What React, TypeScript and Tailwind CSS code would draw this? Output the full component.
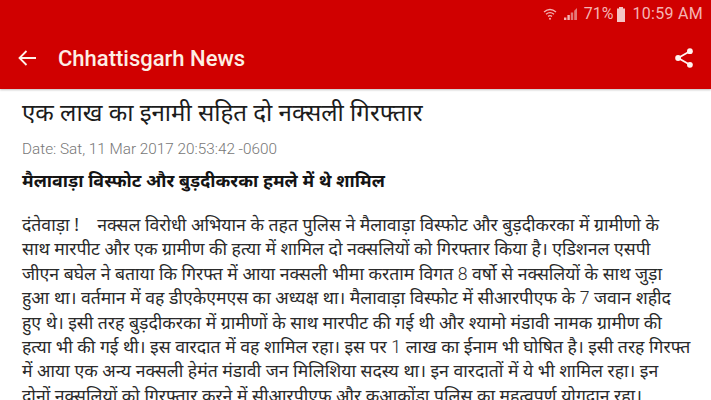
import React from "react";

const lines = [
  "दंतेवाड़ा !    नक्सल विरोधी अभियान के तहत पुलिस ने मैलावाड़ा विस्फोट और बुड़दीकरका में ग्रामीणो के",
  "साथ मारपीट और एक ग्रामीण की हत्या में शामिल दो नक्सलियों को गिरफ्तार किया है। एडिशनल एसपी",
  "जीएन बघेल ने बताया कि गिरफ्त में आया नक्सली भीमा करताम विगत 8 वर्षो से नक्सलियों के साथ जुड़ा",
  "हुआ था। वर्तमान में वह डीएकेएमएस का अध्यक्ष था। मैलावाड़ा विस्फोट में सीआरपीएफ के 7 जवान शहीद",
  "हुए थे। इसी तरह बुड़दीकरका में ग्रामीणों के साथ मारपीट की गई थी और श्यामो मंडावी नामक ग्रामीण की",
  "हत्या भी की गई थी। इस वारदात में वह शामिल रहा। इस पर 1 लाख का ईनाम भी घोषित है। इसी तरह गिरफ्त",
  "में आया एक अन्य नक्सली हेमंत मंडावी जन मिलिशिया सदस्य था। इन वारदातों में ये भी शामिल रहा। इन",
  "दोनों नक्सलियों को गिरफ्तार करने में सीआरपीएफ और कुआकोंडा पुलिस का महत्वपूर्ण योगदान रहा।",
];

function Line({ text }: { text: string }) {
  const parts = text.split(/(\d)/);
  return (
    <div className="h-[24.4px]">
      {parts.map((p, i) =>
        /^\d$/.test(p) ? (
          <span key={i} className="font-['Roboto',sans-serif] font-light leading-[0]">
            {p}
          </span>
        ) : (
          <span key={i}>{p}</span>
        ),
      )}
    </div>
  );
}

export default function App() {
  return (
    <div className="w-[711px] h-[400px] overflow-hidden bg-white font-['Roboto','Noto_Sans',sans-serif]">
      <header className="h-[89px] bg-[#d00000] flex flex-col shadow-[0_1px_2px_rgba(0,0,0,0.25)]">
        <div className="h-[27px] flex items-center justify-end gap-[3px] pr-[8px] pt-[1px] text-[16px] text-[#f5b4b4]">
          <svg width="16" height="14" viewBox="0 0 16 14" fill="none" stroke="#f5b4b4" strokeWidth="1.3">
            <path d="M2 5 Q8 0 14 5" />
            <path d="M4 7.2 Q8 4 12 7.2" />
            <path d="M6 9.4 Q8 8 10 9.4" />
            <circle cx="8" cy="11.8" r="1" fill="#f5b4b4" stroke="none" />
          </svg>
          <svg width="16" height="14" viewBox="0 0 16 14" className="ml-[2px]">
            <path d="M1 13h2.4v-2.5H1zM4.4 13h2.4V8H4.4z" fill="#f5b4b4" />
            <path d="M7.8 13h2.4V5.5H7.8zM11.2 13h2.8V1l-2.8 2.8z" fill="#e47878" />
          </svg>
          <span className="ml-[2px]">71%</span>
          <svg width="10" height="15" viewBox="0 0 10 15">
            <path d="M3 0h4v1.5h2V15H1V1.5h2z" fill="#f5c4c4" />
          </svg>
          <span className="ml-[3px] tracking-[0.3px]">10:59 AM</span>
        </div>
        <div className="flex-1 flex items-center pl-[18px] pr-[17px]">
          <svg width="18" height="16" viewBox="0 0 18 16" fill="none" stroke="#fff0e8" strokeWidth="1.8">
            <path d="M18 8H1.5M8.5 1 1.5 8l7 7" />
          </svg>
          <h1 className="ml-[22px] text-[22px] font-medium text-[#fdeee4]">Chhattisgarh News</h1>
          <svg className="ml-auto" width="20" height="22" viewBox="0 0 22 24" fill="#fff4f0">
            <circle cx="17.5" cy="4.5" r="3.2" />
            <circle cx="4.5" cy="12" r="3.2" />
            <circle cx="17.5" cy="19.5" r="3.2" />
            <path d="M4.5 12 17.5 4.5M4.5 12l13 7.5" stroke="#fff4f0" strokeWidth="2" />
          </svg>
        </div>
      </header>
      <main className="pl-[22px] font-['Noto_Sans','Roboto',sans-serif]">
        <h2 className="mt-[7px] text-[24.1px] leading-[32px] text-[#1c1c1c]">एक लाख का इनामी सहित दो नक्सली गिरफ्तार</h2>
        <p className="mt-[11px] text-[15.3px] leading-[20px] font-['Roboto',sans-serif] font-light text-[#777777]">Date: Sat, 11 Mar 2017 20:53:42 -0600</p>
        <p className="mt-[9px] text-[17.85px] leading-[24px] font-bold text-[#141414]">मैलावाड़ा विस्फोट और बुड़दीकरका हमले में थे शामिल</p>
        <div className="mt-[20px] text-[17.6px] leading-[24.4px] text-[#2a2a2a] whitespace-pre">
          {lines.map((l) => (
            <Line key={l} text={l} />
          ))}
        </div>
      </main>
    </div>
  );
}
